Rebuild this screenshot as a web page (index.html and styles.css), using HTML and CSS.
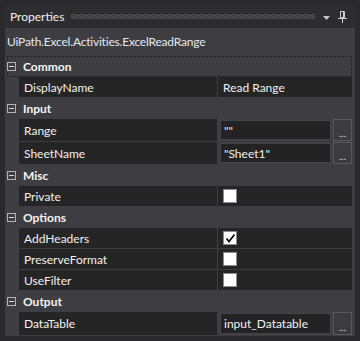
FILE: index.html
```html
<!DOCTYPE html>
<html lang="en">
<head>
    <meta charset="UTF-8">
    <meta name="viewport" content="width=device-width, initial-scale=1.0">
    <title>Properties</title>
    <link rel="stylesheet" href="styles.css">
</head>
<body>
    <div class="window">
        <div class="panel">
            <div class="titlebar">
                <span class="title">Properties</span>
                <span class="grip"></span>
                <svg class="menu-arrow" width="7" height="4" viewBox="0 0 7 4"><path d="M0 0h7L3.5 4z" fill="#c8c8c8"/></svg>
                <svg class="pin" width="9" height="12" viewBox="0 0 9 12">
                    <path d="M2.5 0.5h4v6h-4z" fill="none" stroke="#d0d0d0"/>
                    <path d="M5 1h1.5v5.5H5z" fill="#d0d0d0"/>
                    <path d="M0 7.5h9" stroke="#d0d0d0"/>
                    <path d="M4.5 8v4" stroke="#d0d0d0"/>
                </svg>
            </div>
            <div class="subtitle">UiPath.Excel.Activities.ExcelReadRange</div>
            <div class="grid">
                <div class="category focused"><span class="expander"></span>Common</div>
                <div class="prop">
                    <div class="name">DisplayName</div>
                    <div class="value">Read Range</div>
                </div>

                <div class="category"><span class="expander"></span>Input</div>
                <div class="prop tall">
                    <div class="name">Range</div>
                    <div class="value editor">
                        <div class="textbox">""</div>
                        <div class="dots-btn">...</div>
                    </div>
                </div>
                <div class="prop tall">
                    <div class="name">SheetName</div>
                    <div class="value editor">
                        <div class="textbox">"Sheet1"</div>
                        <div class="dots-btn">...</div>
                    </div>
                </div>

                <div class="category"><span class="expander"></span>Misc</div>
                <div class="prop">
                    <div class="name">Private</div>
                    <div class="value"><span class="check"></span></div>
                </div>

                <div class="category"><span class="expander"></span>Options</div>
                <div class="prop">
                    <div class="name">AddHeaders</div>
                    <div class="value">
                        <span class="check">
                            <svg width="11" height="11" viewBox="0 0 11 11"><path d="M1.5 5.5l2.5 3 5.5-7" fill="none" stroke="#111" stroke-width="1.8"/></svg>
                        </span>
                    </div>
                </div>
                <div class="prop">
                    <div class="name">PreserveFormat</div>
                    <div class="value"><span class="check"></span></div>
                </div>
                <div class="prop">
                    <div class="name">UseFilter</div>
                    <div class="value"><span class="check"></span></div>
                </div>

                <div class="category"><span class="expander"></span>Output</div>
                <div class="prop tall last">
                    <div class="name">DataTable</div>
                    <div class="value editor">
                        <div class="textbox">input_Datatable</div>
                        <div class="dots-btn">...</div>
                    </div>
                </div>
            </div>
        </div>
    </div>
</body>
</html>
```

FILE: styles.css
```css
body {
    margin: 0;
    background: #252526;
    font-family: 'Lato', 'Noto Sans', sans-serif;
    font-size: 12px;
    color: #f1f1f1;
}
.window {
    width: 360px;
    height: 341px;
    padding: 5px;
    box-sizing: border-box;
    background: #2a2a2c;
}
.panel {
    height: 331px;
    background: #3e3e42;
    display: flex;
    flex-direction: column;
}
.titlebar {
    height: 23px;
    background: #2d2d30;
    display: flex;
    align-items: center;
    padding: 0 8px 0 5px;
}
.title {
    color: #f1f1f1;
}
.grip {
    flex: 1;
    height: 5px;
    margin: 0 8px 0 7px;
    background-image: conic-gradient(#5c5c60 25%, transparent 0 50%, #5c5c60 0 75%, transparent 0);
    background-size: 2px 2px;
}
.menu-arrow {
    margin-right: 8px;
    margin-top: 3px;
}
.subtitle {
    height: 28px;
    line-height: 27px;
    padding-left: 2px;
    color: #e2e8f0;
    letter-spacing: -0.2px;
}
.grid {
    padding: 0 3px 0 2px;
}
.category {
    height: 21px;
    display: flex;
    align-items: center;
    font-weight: bold;
    color: #f4f4f4;
    box-sizing: border-box;
}
.category.focused {
    outline: 1px dotted #1c1c1c;
    outline-offset: -1px;
}
.expander {
    width: 7px;
    height: 7px;
    border: 1px solid #b4b4b4;
    margin: 0 7px 0 0;
    position: relative;
}
.expander::after {
    content: "";
    position: absolute;
    left: 1px;
    right: 1px;
    top: 3px;
    height: 1px;
    background: #d8d8d8;
}
.prop {
    display: grid;
    grid-template-columns: 198px 1fr;
    column-gap: 1px;
    margin-left: 12px;
    height: 20px;
    margin-bottom: 1px;
}
.prop.tall {
    height: 22px;
}
.prop.last {
    height: 23px;
}
.name, .value {
    background: #252526;
    display: flex;
    align-items: center;
}
.name {
    padding-left: 5px;
}
.value {
    padding-left: 5px;
}
.value.editor {
    background: #3e3e42;
    padding-left: 2px;
    align-items: stretch;
    gap: 2px;
}
.textbox {
    flex: 1;
    margin: 1px 0;
    background: #232324;
    border: 1px solid #454549;
    display: flex;
    align-items: center;
    padding-left: 3px;
}
.dots-btn {
    width: 17px;
    background: #3c3c40;
    border: 1px solid #5a5a5e;
    color: #dcdcdc;
    font-size: 10px;
    line-height: 1;
    display: flex;
    align-items: flex-end;
    justify-content: center;
    padding-bottom: 2px;
}
.check {
    width: 12px;
    height: 12px;
    background: #fff;
    border: 1px solid #8c8c8c;
    display: flex;
    align-items: center;
    justify-content: center;
}
```
